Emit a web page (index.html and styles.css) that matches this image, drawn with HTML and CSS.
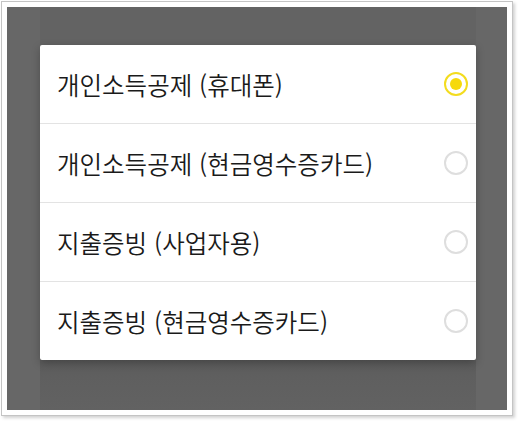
FILE: index.html
```html
<!DOCTYPE html>
<html lang="ko">
<head>
<meta charset="utf-8">
<link rel="stylesheet" href="styles.css">
</head>
<body>
<div class="frame">
  <div class="screen">
    <div class="column">
      <div class="dialog">
        <div class="row">
          <span class="label">개인소득공제 (휴대폰)</span>
          <span class="radio checked"></span>
        </div>
        <div class="row">
          <span class="label">개인소득공제 (현금영수증카드)</span>
          <span class="radio"></span>
        </div>
        <div class="row">
          <span class="label">지출증빙 (사업자용)</span>
          <span class="radio"></span>
        </div>
        <div class="row">
          <span class="label">지출증빙 (현금영수증카드)</span>
          <span class="radio"></span>
        </div>
      </div>
    </div>
  </div>
</div>
</body>
</html>
```

FILE: styles.css
```css
html, body {
  margin: 0;
  padding: 0;
  background: #ffffff;
}
body {
  width: 521px;
  height: 423px;
  overflow: hidden;
  font-family: "Noto Sans CJK KR", "Noto Sans", sans-serif;
}
.frame {
  margin: 1px 0 0 1px;
  width: 500px;
  height: 403px;
  padding: 5px;
  background: #ffffff;
  border: 1px solid #c4c4c4;
  box-shadow: 2px 2px 3px rgba(0, 0, 0, 0.18);
}
.screen {
  width: 500px;
  height: 403px;
  background: #676767;
  display: flex;
  padding-left: 33px;
  box-sizing: border-box;
}
.column {
  width: 436px;
  height: 100%;
  background: linear-gradient(#636363, #636363 318px, #565656 328px, #5f5f5f 370px, #626262);
  padding-top: 38px;
  box-sizing: border-box;
}
.dialog {
  background: #ffffff;
  border-radius: 2px;
  box-shadow: 0 3px 8px rgba(0, 0, 0, 0.25);
  display: flex;
  flex-direction: column;
}
.row {
  height: 78px;
  display: flex;
  align-items: center;
  justify-content: space-between;
  padding: 0 8px 0 17px;
  border-bottom: 1px solid #e3e3e3;
}
.row:last-child {
  border-bottom: none;
}
.label {
  font-size: 24.5px;
  font-weight: 350;
  color: #1a1a1a;
  letter-spacing: 0;
}
.radio {
  width: 20px;
  height: 20px;
  border: 2px solid #dedede;
  border-radius: 50%;
  display: flex;
  align-items: center;
  justify-content: center;
}
.radio.checked {
  border-color: #f3dc1f;
}
.radio.checked::after {
  content: "";
  width: 12px;
  height: 12px;
  border-radius: 50%;
  background: #f6d90a;
}
```
